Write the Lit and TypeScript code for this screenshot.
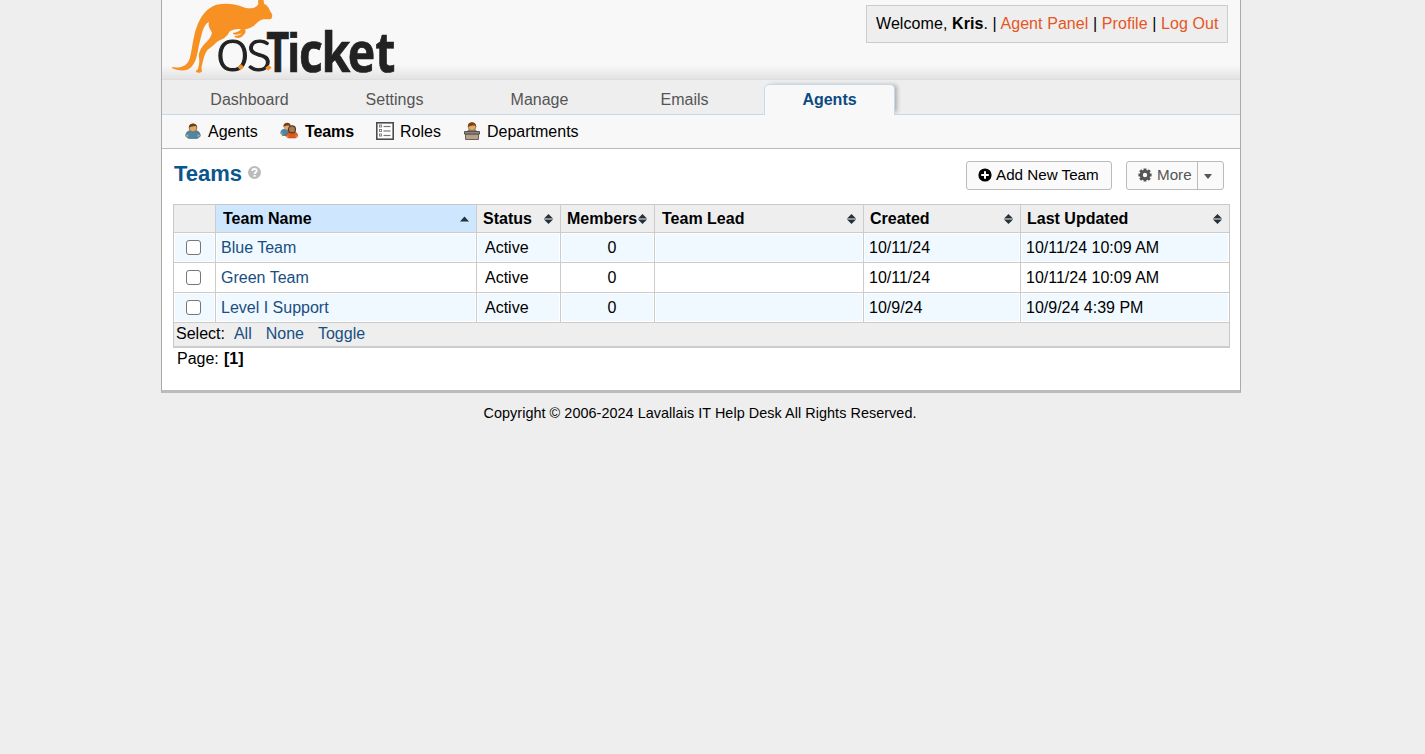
import { LitElement, html, css, svg } from "lit";
import { customElement, property } from "lit/decorators.js";
import { classMap } from "lit/directives/class-map.js";

const logo = html`<svg class="logo" viewBox="21 0 720 237" width="240" height="79" role="img" aria-label="osTicket">
  <path fill="#f79123" d="M52 201C76 206 96 198 104 176C112 148 114 112 124 84C135 50 155 24 184 14C210 8 240 11 262 20C282 29 303 26 310 12L309 4L312 -6H325L327 11C337 15 342 24 345 33C351 40 354 47 350 54C348 61 335 56 325 58C310 61 305 73 292 80C284 85 277 86 270 88C275 96 269 103 262 109C256 115 245 115 238 110L240 107C248 108 257 105 260 100C252 103 243 107 234 102V98C245 99 253 94 258 88C246 86 234 88 223 95C217 110 203 117 194 121C182 127 174 140 161 147C151 154 146 174 141 196C137 205 143 210 140 215C136 219 128 219 123 216C122 212 125 210 129 208C132 195 134 184 132 173C129 158 138 144 149 131C160 120 168 112 171 98C165 87 158 79 162 65C143 76 141 102 134 127C127 155 127 183 109 201C94 217 65 211 51 204Z"/>
  <text class="thin" x="182 274" y="214">os</text>
  <text class="heavy" transform="scale(.73 1)" x="457" y="215">T</text>
  <text class="heavy" transform="scale(.85 1)" y="215"><tspan class="square" x="467">i</tspan><tspan x="508 588 680 777">cket</tspan></text>
  <path fill="#f79123" d="M248 201l11-8 8 8-11 10zM331 203l10-8 9 8-11 9z"/>
</svg>`;

const personIcon = html`<svg width="16" height="16" viewBox="0 0 16 16">
  <path d="M.7 13.2C.8 9 3 8 5.5 7.6h5C13 8 15.2 9 15.3 13.2L12.4 15.5H3.6Z" fill="#4c87a5" stroke="#386a84" stroke-width=".6"/>
  <path d="M.8 12.2l2.5-1v3.3zM15.2 12.2l-2.5-1v3.3z" fill="#d8a36b"/>
  <circle cx="8" cy="5" r="3.9" fill="#dda970" stroke="#80552f" stroke-width=".7"/>
  <path d="M3.800 4.500C3.500-1 12.500-1 12.200 4.500L10.500 2.700C9 3.500 6 3.400 3.800 4.500Z" fill="#704014"/>
</svg>`;

const teamIcon = html`<svg width="18" height="17" viewBox="0 0 18 17">
  <path d="M.3 11.500C.5 7.500 3 7 5 6.800h4L11 14H2.500Z" fill="#4c87a5"/>
  <path d="M.2 11l2.200-.8v3.600z" fill="#d8a36b"/>
  <circle cx="7" cy="4.300" r="3.400" fill="#dda970"/>
  <path d="M3.400 4.800C3-.7 11-.6 10.700 4.200C8 2.800 6 3.500 3.400 4.800Z" fill="#704014"/>
  <path d="M6 14.500C6.200 11 8 10 10 9.800h4c2.500.3 3.700 1.800 3.800 4.700L15.500 16H8.500Z" fill="#dc5a1e" stroke="#b2420f" stroke-width=".5"/>
  <path d="M6.300 14.600l2-1.500v2.500zM17.700 14.600l-2-1.500v2.500z" fill="#d8a36b"/>
  <circle cx="12" cy="7.400" r="3.500" fill="#a77a51" stroke="#54351c" stroke-width="1.100"/>
</svg>`;

const listIcon = html`<svg width="18" height="18" viewBox="0 0 18 18">
  <rect x=".8" y=".8" width="16.400" height="16.400" fill="#fff" stroke="#4b4b4f" stroke-width="1.600"/>
  ${[4, 8.5, 13].map(y => svg`<rect x="3.500" y=${y - 1} width="2" height="2" fill="#fff" stroke="#777" stroke-width=".9"/><path d="M7.500 ${y + 0.5}h7" stroke="#77777b" stroke-width="1.200"/>`)}
</svg>`;

const deskIcon = html`<svg width="16" height="18" viewBox="0 0 16 18">
  <path d="M3 10c0-2 2-3 5-3s5 1 5 3z" fill="#4c87a5"/>
  <circle cx="8" cy="4.700" r="3.900" fill="#e0a96d" stroke="#8a5526" stroke-width=".6"/>
  <path d="M3.800 4.800C3.500-1.200 12.500-1.200 12.200 5L10.700 3.500H8.500L3.800 4.800Z" fill="#7c430e"/>
  <path d="M1.500 12h13v5.500h-13z" fill="#b9a08b" stroke="#67605a"/>
  <path d="M.5 9.500h15v2.600H.5z" fill="#8f8071" stroke="#57524d"/>
</svg>`;

const helpIcon = html`<svg class="help" width="13" height="13" viewBox="0 0 13 13">
  <circle cx="6.500" cy="6.500" r="6.500" fill="#bbb"/>
  <path d="M4.300 4.900C4.300 2.300 8.700 2.300 8.700 4.700C8.700 6.300 6.600 6.300 6.600 7.900" fill="none" stroke="#fff" stroke-width="1.900"/>
  <path d="M5.600 8.900h2v1.900h-2z" fill="#fff"/>
</svg>`;

const plusIcon = html`<svg width="14" height="14" viewBox="0 0 14 14">
  <circle cx="7" cy="7" r="6.600" fill="#000"/>
  <path d="M7 3.200v7.600M3.200 7h7.600" stroke="#fff" stroke-width="2"/>
</svg>`;

const gearIcon = html`<svg width="14" height="14" viewBox="0 0 14 14">
  <path d="M7 .4v13.200M.4 7h13.200M2.200 2.200l9.600 9.600M11.800 2.200l-9.600 9.600" stroke="#555" stroke-width="2.900"/>
  <circle cx="7" cy="7" r="3.700" fill="none" stroke="#555" stroke-width="3"/>
  <circle cx="7" cy="7" r="2.200" fill="#fafafa"/>
</svg>`;

@customElement("sort-mark")
class SortMark extends LitElement {
  @property({ type: Boolean }) up = false;
  static styles = css`
    :host { display: block; height: 10px; }
    svg { display: block; }
  `;
  render() {
    return this.up
      ? html`<svg width="9" height="10" viewBox="0 0 9 10"><path d="M0 7.500l4.500-5L9 7.500z" fill="#263238"/></svg>`
      : html`<svg width="9" height="10" viewBox="0 0 9 10"><path d="M0 4.500L4.500 0 9 4.500zM0 5.500L4.500 10 9 5.500z" fill="#263238"/><path d="M0 5h9" stroke="#8b9194" stroke-width="1.200"/></svg>`;
  }
}

@customElement("app-root")
class AppRoot extends LitElement {
  static styles = css`
    :host {
      display: block;
      min-height: 754px;
      background: #eee;
      color: #000;
      font: 16px/18px "Liberation Sans", Arial, sans-serif;
    }
    * { box-sizing: border-box; }
    svg { display: block; flex: none; }
    a { text-decoration: none; color: #184e81; }
    .page {
      width: 1080px;
      height: 393px;
      margin-left: 161px;
      border: solid #aaa;
      border-width: 0 1px 3px;
      border-bottom-color: #bbb;
      background: #fff;
    }
    header {
      height: 80px;
      display: flex;
      justify-content: space-between;
      align-items: flex-start;
      border-bottom: 1px solid #ddd;
      background: linear-gradient(#f8f8f8 0, #f8f8f8 65px, #e3e3e3 79px);
    }
    .logo { overflow: visible; }
    .thin { font: 300 182px Lato, sans-serif; fill: #222; stroke: #222; stroke-width: 3.500px; }
    .heavy { font: 700 164px "Open Sans", sans-serif; fill: #222; stroke: #222; stroke-width: 2px; }
    .square { font-family: "Liberation Sans", Arial, sans-serif; }
    .welcome {
      margin: 5px 12px 0 0;
      width: 362px;
      height: 38px;
      padding: 9px 0 0 9px;
      border: 1px solid #ccc;
      background: #eee;
      white-space: nowrap;
      letter-spacing: 0.08px;
    }
    .welcome a { color: #e65524; }
    .tabs {
      display: flex;
      gap: 14px;
      height: 35px;
      padding: 4px 0 0 22px;
      border-bottom: 1px solid #c5d9e8;
      background: #eee;
    }
    .tab {
      width: 131px;
      height: 31px;
      padding-top: 7px;
      text-align: center;
      color: #555;
    }
    .tab.active {
      padding-top: 6px;
      border: 1px solid #c5d9e8;
      border-bottom: 0;
      border-radius: 5px 5px 0 0;
      background: #f8f8f8;
      box-shadow: 4px -1px 4px -2px #aaa;
      clip-path: inset(-4px -8px 0 0);
      font-weight: 700;
      color: #0b4a82;
    }
    .subnav {
      display: grid;
      grid-template-columns: 95px 96px 88px auto;
      align-items: center;
      height: 34px;
      padding: 0 0 0 23px;
      border-bottom: 1px solid #bbb;
      background: #f8f8f8;
    }
    .sub { display: flex; align-items: center; gap: 7px; color: #000; }
    .sub svg { margin-bottom: 2px; }
    .sub.roles { gap: 6px; }
    .sub.current { font-weight: 700; letter-spacing: -0.1px; }
    main { padding: 12px 10px 0 11px; }
    .bar { display: flex; height: 43px; align-items: flex-start; }
    h1 { margin: 0 6px 0 1px; font-size: 22px; line-height: 25px; color: #0a568e; }
    .help { margin-top: 5px; }
    .button {
      display: flex;
      align-items: center;
      height: 29px;
      border: 1px solid #bbb;
      border-radius: 3px;
      background: #fafafa;
      font-size: 15.200px;
    }
    .add { width: 146px; margin-left: auto; padding: 0 0 1px 11px; gap: 4px; }
    .more { width: 98px; margin: 0 6px 0 14px; color: #555; }
    .label { display: flex; align-items: center; gap: 5px; width: 71px; height: 27px; padding: 0 0 1px 11px; border-right: 1px solid #bbb; }
    .caret { margin: 2px 0 0 6px; border: solid transparent; border-width: 5px 4.500px 0; border-top-color: #555; }
    .table { border: 1px solid #c8c8c8; border-bottom: 2px solid #ccc; width: 1057px; }
    .row {
      display: grid;
      grid-template-columns: 42px 261px 84px 94px 209px 157px 208px;
      height: 30px;
      border-bottom: 1px solid #ccc;
    }
    .row.head { height: 28px; background: #eee; font-weight: 700; }
    .cell {
      display: flex;
      align-items: center;
      padding: 0 0 0 5px;
      border-right: 1px solid #ccc;
      white-space: nowrap;
    }
    .row .cell:last-child { border-right: 0; }
    .body .cell { box-shadow: inset 0 0 0 1px #fff; }
    .body.odd .cell { background: #f0f9ff; }
    .body .status { padding-left: 8px; }
    .body .members { justify-content: center; padding: 0 0 0 9px; }
    .body .check { padding-left: 12px; }
    .head .cell { justify-content: space-between; padding: 0 7px 0 6px; }
    .head .name, .head .lead { padding-left: 7px; }
    .head .name { background: #cfe6ff; }
    input {
      appearance: none;
      width: 15px;
      height: 15px;
      margin: 0;
      border: 1.300px solid #767676;
      border-radius: 3px;
      background: #fff;
    }
    .select { display: flex; height: 23px; padding: 2px 2px 0; background: #eee; }
    .select a { margin-right: 14px; }
    .select span { margin-right: 9px; }
    .pages { padding: 2px 4px; word-spacing: 0.700px; }
    footer { padding-top: 12px; width: 1400px; text-align: center; font-size: 14.400px; line-height: 17px; letter-spacing: 0.055px; }
  `;

  private teams = [
    ["Blue Team", "10/11/24", "10/11/24 10:09 AM"],
    ["Green Team", "10/11/24", "10/11/24 10:09 AM"],
    ["Level I Support", "10/9/24", "10/9/24 4:39 PM"],
  ];

  private columns = [
    ["name", "Team Name"],
    ["status", "Status"],
    ["members", "Members"],
    ["lead", "Team Lead"],
    ["created", "Created"],
    ["updated", "Last Updated"],
  ];

  render() {
    return html`
      <div class="page">
        <header>
          ${logo}
          <div class="welcome">Welcome, <b>Kris</b>. | <a>Agent Panel</a> | <a>Profile</a> | <a>Log Out</a></div>
        </header>
        <nav class="tabs">
          ${["Dashboard", "Settings", "Manage", "Emails", "Agents"].map(
            t => html`<a class=${classMap({ tab: true, active: t === "Agents" })}>${t}</a>`
          )}
        </nav>
        <nav class="subnav">
          <a class="sub">${personIcon}Agents</a>
          <a class="sub current">${teamIcon}Teams</a>
          <a class="sub roles">${listIcon}Roles</a>
          <a class="sub">${deskIcon}Departments</a>
        </nav>
        <main>
          <div class="bar">
            <h1>Teams</h1>
            ${helpIcon}
            <div class="button add">${plusIcon}Add New Team</div>
            <div class="button more"><span class="label">${gearIcon}More</span><span class="caret"></span></div>
          </div>
          <div class="table">
            <div class="row head">
              <div class="cell"></div>
              ${this.columns.map(
                ([k, t]) => html`<div class="cell ${k}">${t}<sort-mark ?up=${k === "name"}></sort-mark></div>`
              )}
            </div>
            ${this.teams.map(
              ([name, created, updated], i) => html`
                <div class=${classMap({ row: true, body: true, odd: i % 2 === 0 })}>
                  <div class="cell check"><input type="checkbox" /></div>
                  <div class="cell"><a>${name}</a></div>
                  <div class="cell status">Active</div>
                  <div class="cell members">0</div>
                  <div class="cell"></div>
                  <div class="cell">${created}</div>
                  <div class="cell">${updated}</div>
                </div>
              `
            )}
            <div class="select"><span>Select:</span><a>All</a><a>None</a><a>Toggle</a></div>
          </div>
          <div class="pages">Page: <b>[1]</b></div>
        </main>
      </div>
      <footer>Copyright © 2006-2024 Lavallais IT Help Desk All Rights Reserved.</footer>
    `;
  }
}
